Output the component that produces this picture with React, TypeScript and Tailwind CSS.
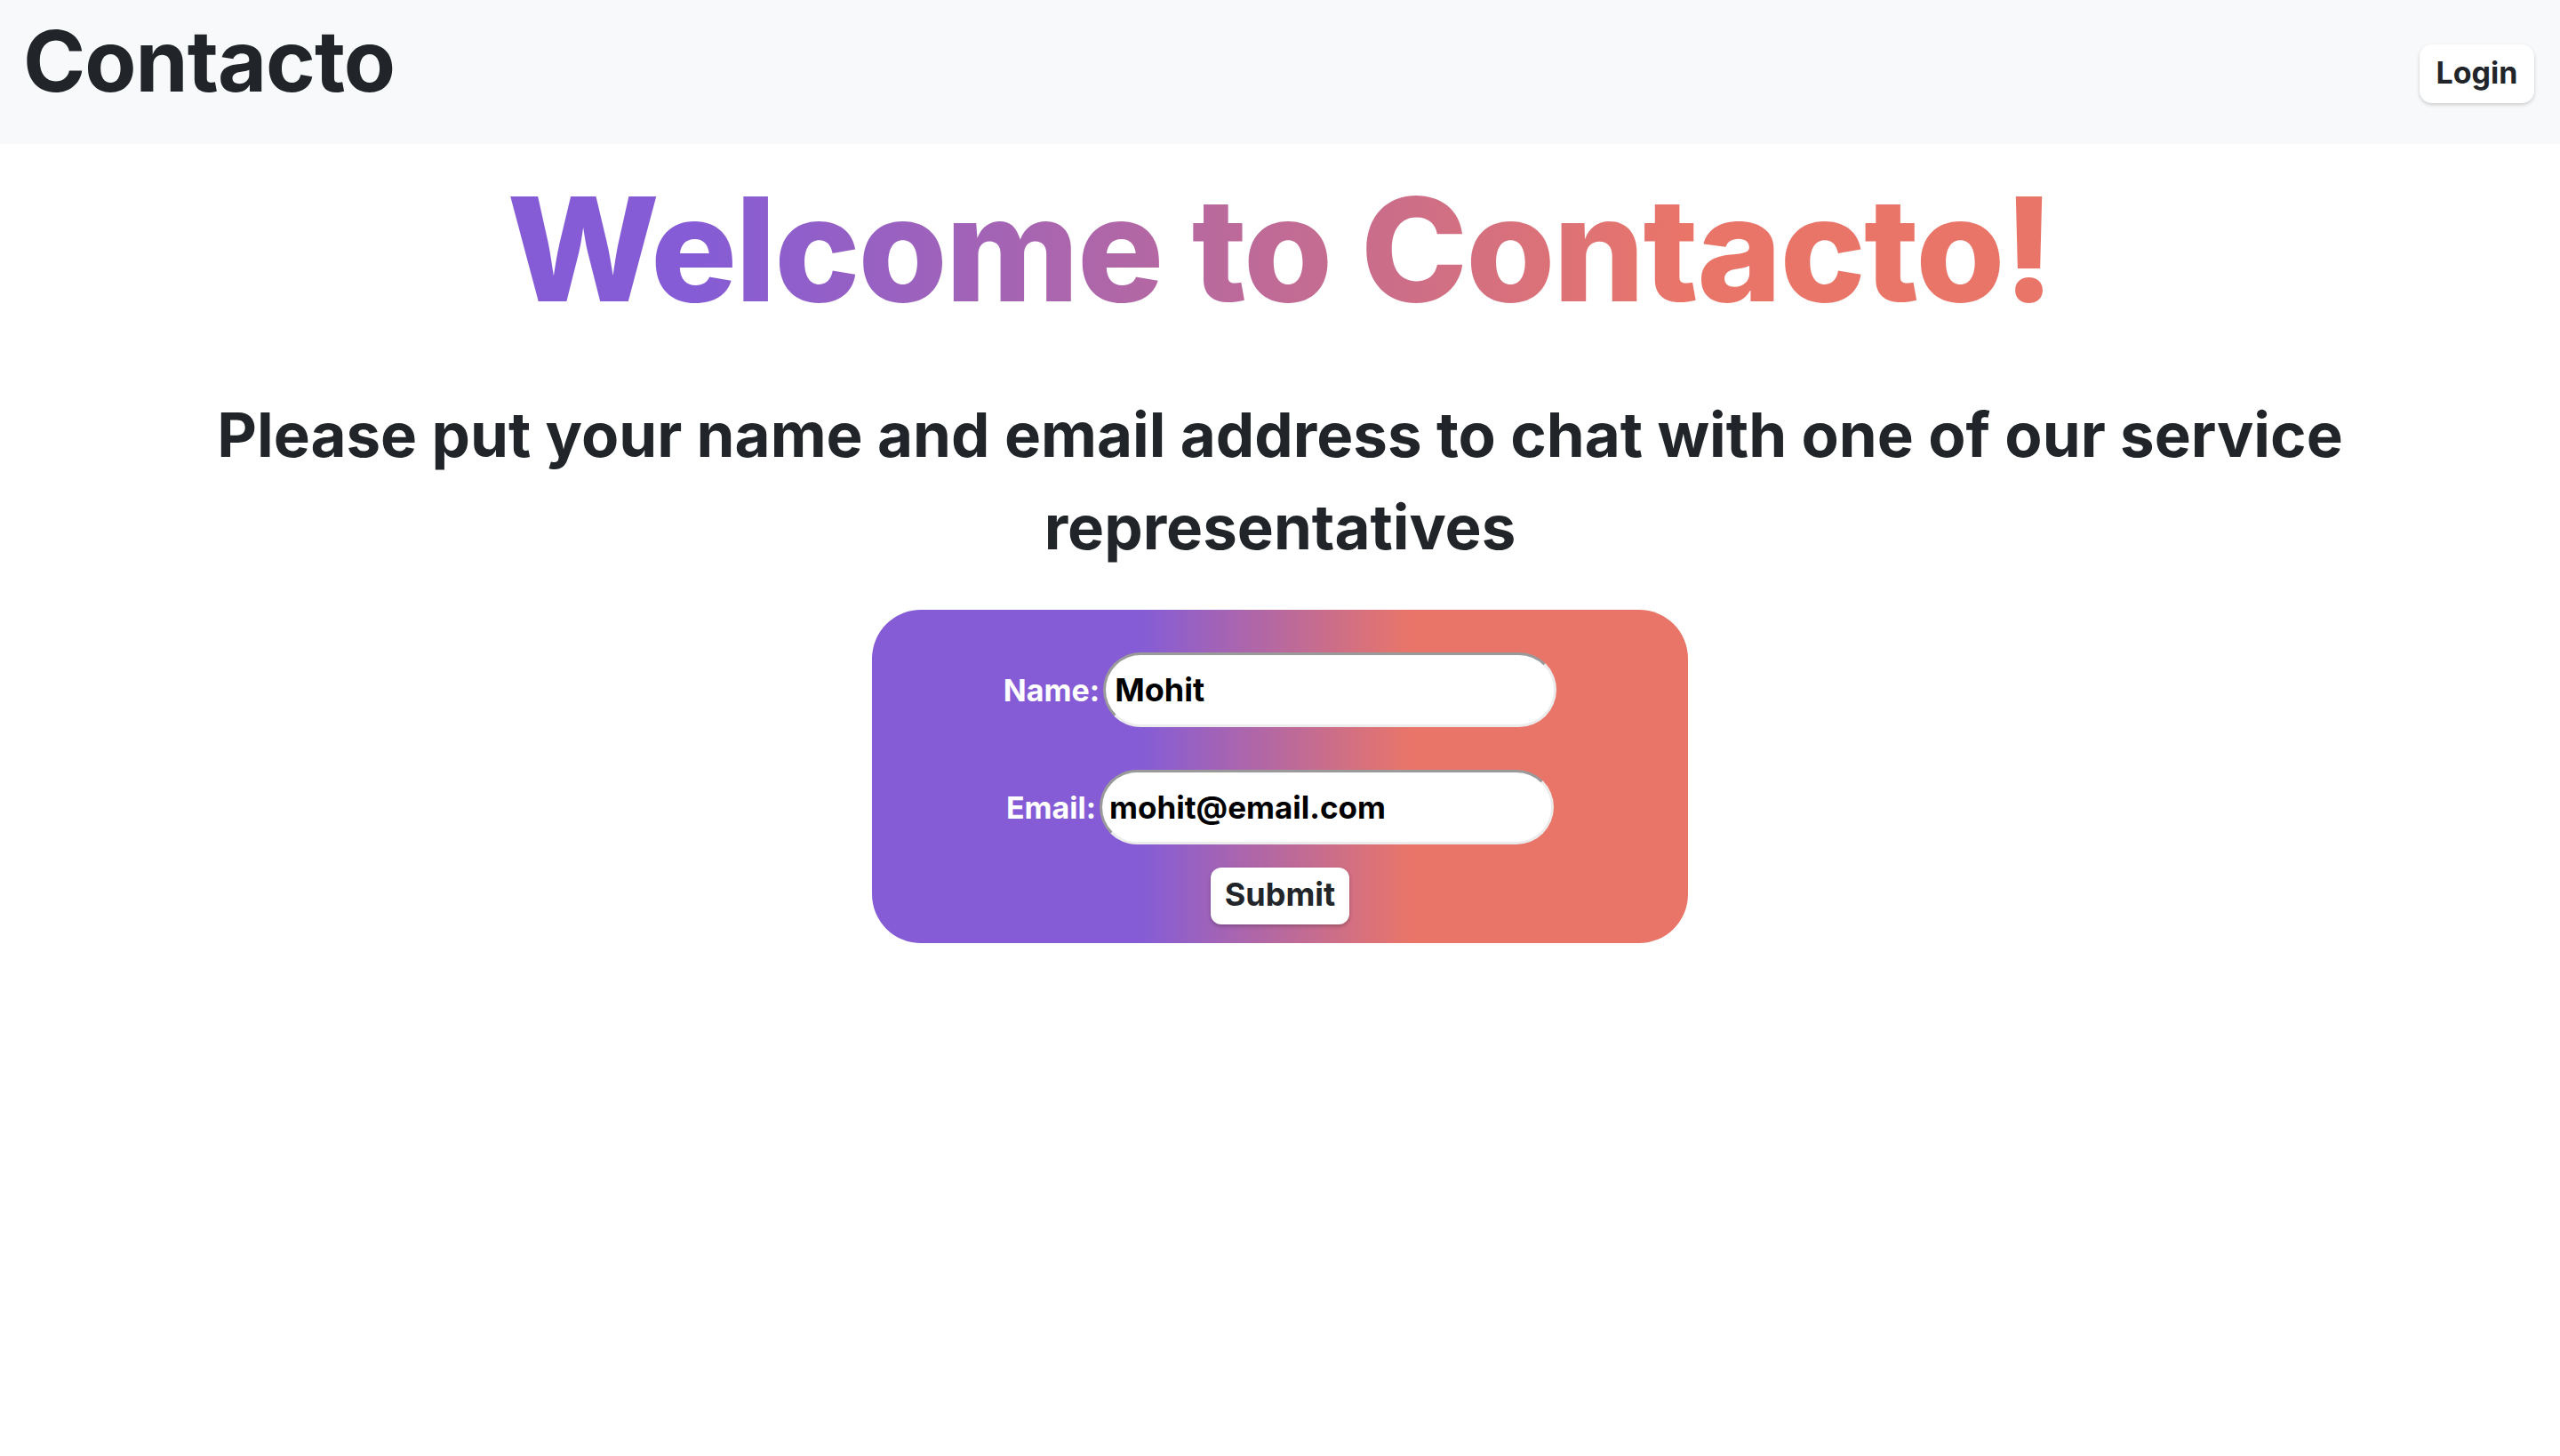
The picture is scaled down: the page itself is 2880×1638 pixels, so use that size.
export default function App() {
  return (
    <div className="min-h-screen bg-white font-['Inter',sans-serif] text-[#212529]">
      {/* navbar */}
      <nav className="flex h-[162px] items-start justify-between bg-[#f8f9fa] pl-[26px] pr-[29px]">
        <a className="mt-[14px] text-[95px] font-bold leading-[110px] tracking-[-1px] text-[#212529]">Contacto</a>
        <button className="mt-[50px] h-[66px] w-[129px] rounded-[14px] bg-white pb-[4px] text-[34px] font-bold text-[#212529] shadow-[0_2px_4px_rgba(0,0,0,0.18)]">
          Login
        </button>
      </nav>

      <main className="flex flex-col items-center">
        <h1 className="mt-[37px] bg-[linear-gradient(to_right,#855cd6_12%,#e97569_76%)] bg-clip-text text-[162px] font-extrabold leading-none tracking-[-2px] text-transparent">
          Welcome to Contacto!
        </h1>

        <h2 className="mt-[76px] max-w-[2600px] text-center text-[69px] font-bold leading-[104px] text-[#212529]">
          Please put your name and email address to chat with one of our service representatives
        </h2>

        <form className="mt-[41px] flex w-[918px] flex-col items-center rounded-[55px] bg-[linear-gradient(to_right,#855cd6_33%,#e97569_66%)] pb-[21px] pt-[48px]">
          <div className="flex items-center">
            <label className="mr-[4px] text-[34px] font-bold text-white">Name:</label>
            <input
              defaultValue="Mohit"
              className="h-[84px] w-[510px] rounded-full border-[3px] border-b-[#ececec] border-l-[#9a9a9a] border-r-[#ececec] border-t-[#9a9a9a] bg-white px-[10px] text-[36px] font-bold text-black outline-none"
            />
          </div>
          <div className="mt-[48px] flex items-center">
            <label className="mr-[4px] text-[34px] font-bold text-white">Email:</label>
            <input
              defaultValue="mohit@email.com"
              className="h-[84px] w-[511px] rounded-full border-[3px] border-b-[#ececec] border-l-[#9a9a9a] border-r-[#ececec] border-t-[#9a9a9a] bg-white px-[8px] text-[35px] font-bold text-black outline-none"
            />
          </div>
          <button
            type="button"
            className="mt-[26px] h-[64px] w-[156px] rounded-[12px] bg-white pb-[4px] text-[36px] font-bold text-[#212529] shadow-[0_2px_4px_rgba(0,0,0,0.25)]"
          >
            Submit
          </button>
        </form>
      </main>
    </div>
  );
}
